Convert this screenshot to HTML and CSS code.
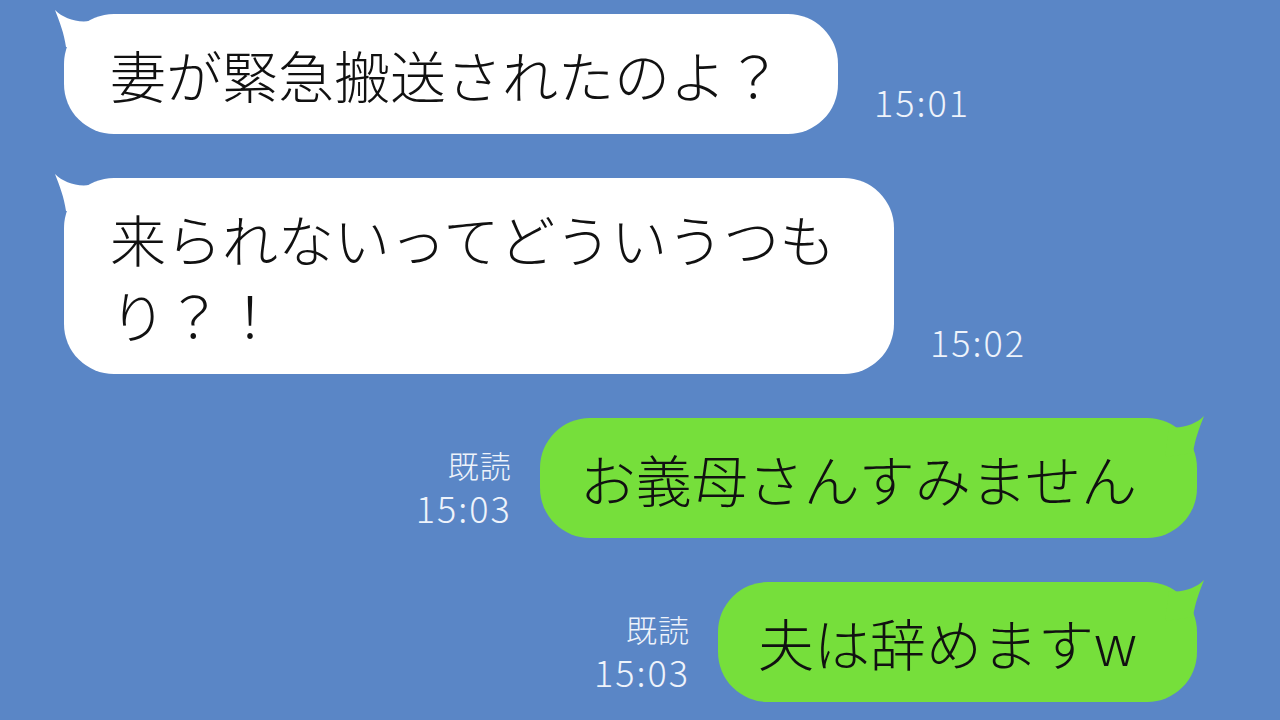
FILE: index.html
```html
<!DOCTYPE html>
<html lang="ja">
<head>
    <meta charset="UTF-8">
    <meta name="viewport" content="width=device-width, initial-scale=1.0">
    <title>トーク</title>
    <link rel="stylesheet" href="styles.css">
</head>
<body>

<div class="chat">
    <div class="row left">
        <div class="bubble white">
            <svg class="tail" viewBox="0 0 50 50"><path d="M1 1 C6 14 10 24 12 38 L40 42 L36 12 C22 14 9 9 1 1 Z"/></svg>
            妻が緊急搬送されたのよ？
        </div>
        <div class="meta">15:01</div>
    </div>

    <div class="row left">
        <div class="bubble white wide">
            <svg class="tail" viewBox="0 0 50 50"><path d="M1 1 C6 14 10 24 12 38 L40 42 L36 12 C22 14 9 9 1 1 Z"/></svg>
            来られないってどういうつもり？！
        </div>
        <div class="meta">15:02</div>
    </div>

    <div class="row right">
        <div class="meta">
            <div class="read">既読</div>
            <div>15:03</div>
        </div>
        <div class="bubble green">
            <svg class="tail" viewBox="0 0 50 50"><path d="M1 1 C6 14 10 24 12 38 L40 42 L36 12 C22 14 9 9 1 1 Z"/></svg>
            お義母さんすみません
        </div>
    </div>

    <div class="row right">
        <div class="meta">
            <div class="read">既読</div>
            <div>15:03</div>
        </div>
        <div class="bubble green">
            <svg class="tail" viewBox="0 0 50 50"><path d="M1 1 C6 14 10 24 12 38 L40 42 L36 12 C22 14 9 9 1 1 Z"/></svg>
            夫は辞めますw
        </div>
    </div>
</div>

</body>
</html>
```

FILE: styles.css
```css
body {
    margin: 0;
    background-color: #5a86c6;
    font-family: "Noto Sans CJK JP", "Noto Sans", sans-serif;
    font-weight: 300;
    overflow: hidden;
}
.chat {
    display: flex;
    flex-direction: column;
    gap: 44px;
    padding: 14px 83px 0 64px;
}
.row {
    display: flex;
    align-items: flex-end;
}
.row.right {
    justify-content: flex-end;
}
.bubble {
    position: relative;
    font-size: 56px;
    line-height: 76px;
    color: #111;
    border-radius: 50px;
    padding: 22px 56px 22px 46px;
}
.bubble.wide {
    max-width: 728px;
}
.white {
    background-color: #fff;
}
.green {
    background-color: #76df3b;
    padding-left: 40px;
    padding-right: 60px;
}
.tail {
    position: absolute;
    top: -5px;
    left: -10px;
    width: 50px;
    height: 50px;
}
.white .tail path {
    fill: #fff;
}
.green .tail {
    left: auto;
    right: -8px;
    top: -3px;
    transform: scaleX(-1);
}
.green .tail path {
    fill: #76df3b;
}
.meta {
    color: #eef3fb;
    font-size: 36px;
    line-height: 42px;
    letter-spacing: 2px;
    margin-bottom: 12px;
}
.left .meta {
    margin-left: 36px;
}
.right .meta {
    margin-right: 28px;
    text-align: right;
    margin-bottom: 10px;
}
.read {
    font-size: 31px;
    letter-spacing: 1px;
}
```
